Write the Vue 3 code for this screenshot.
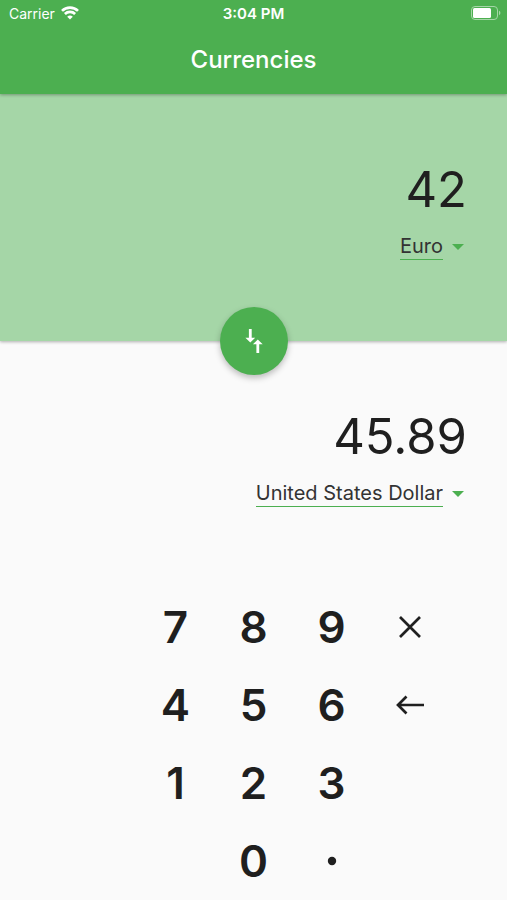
<template>
  <div class="converter">
    <header class="app-bar">
      <div class="status-bar">
        <div class="carrier">
          <span>Carrier</span>
          <svg class="wifi" viewBox="0 0 18 14" aria-hidden="true">
            <path d="M1 4.9a11.4 11.4 0 0 1 16 0" />
            <path d="M3.9 8a7.3 7.3 0 0 1 10.2 0" />
            <path class="wifi-dot" d="M9 13.6 6.2 10.8a4 4 0 0 1 5.6 0z" />
          </svg>
        </div>
        <span class="time">3:04 PM</span>
        <svg class="battery" viewBox="0 0 30 14" aria-hidden="true">
          <rect class="battery-case" x="0.5" y="0.5" width="26" height="13" rx="3.5" />
          <rect class="battery-level" x="2" y="2" width="18" height="10" rx="1.5" />
          <path class="battery-cap" d="M28 4.8v4.4a2.4 2.4 0 0 0 0-4.4z" />
        </svg>
      </div>
      <h1 class="title">Currencies</h1>
    </header>

    <section class="panel panel-from">
      <output class="amount">{{ input }}</output>
      <div class="currency">
        <select v-model="from" class="currency-select" aria-label="From currency">
          <option v-for="c in currencies" :key="c.name" :value="c.name">{{ c.name }}</option>
        </select>
        <svg class="arrow" viewBox="0 0 12 6" aria-hidden="true"><path d="M0 0h12L6 6z" /></svg>
      </div>
      <button class="swap" type="button" aria-label="Swap currencies" @click="swap">
        <svg viewBox="0 0 26 26" aria-hidden="true">
          <path d="M7.9 1h2.8v8.8h3.5l-4.9 4.7-4.9-4.7h3.5z" />
          <path d="M15.4 25h2.8v-8.8h3.5l-4.9-4.7-4.9 4.7h3.5z" />
        </svg>
      </button>
    </section>

    <section class="panel">
      <output class="amount">{{ result }}</output>
      <div class="currency">
        <select v-model="to" class="currency-select" aria-label="To currency">
          <option v-for="c in currencies" :key="c.name" :value="c.name">{{ c.name }}</option>
        </select>
        <svg class="arrow" viewBox="0 0 12 6" aria-hidden="true"><path d="M0 0h12L6 6z" /></svg>
      </div>
    </section>

    <div class="keypad">
      <div v-for="(row, index) in rows" :key="index" class="keypad-row">
        <template v-for="(key, i) in row" :key="i">
          <button v-if="key === 'clear'" class="key" type="button" aria-label="Clear" @click="press(key)">
            <svg viewBox="0 0 28 28" aria-hidden="true"><path d="M4 4l20 20M24 4L4 24" /></svg>
          </button>
          <button v-else-if="key === 'back'" class="key" type="button" aria-label="Backspace" @click="press(key)">
            <svg viewBox="0 0 28 28" aria-hidden="true"><path d="M28 14H2M10.5 5.5L2 14l8.5 8.5" /></svg>
          </button>
          <button v-else-if="key === '.'" class="key" type="button" aria-label="Decimal point" @click="press(key)">
            <svg viewBox="0 0 28 28" aria-hidden="true"><circle cx="14" cy="14" r="4.2" /></svg>
          </button>
          <button v-else-if="key" class="key" type="button" @click="press(key)">{{ key }}</button>
          <span v-else></span>
        </template>
      </div>
    </div>
  </div>
</template>

<script setup>
import { ref, computed } from 'vue';

// value of one unit in US dollars
const currencies = [
  { name: 'Euro', rate: 1.0926 },
  { name: 'United States Dollar', rate: 1 },
];

const rows = [
  ['', '7', '8', '9', 'clear'],
  ['', '4', '5', '6', 'back'],
  ['', '1', '2', '3', ''],
  ['', '', '0', '.', ''],
];

const input = ref('42');
const from = ref('Euro');
const to = ref('United States Dollar');

const rateOf = (name) => currencies.find((c) => c.name === name).rate;

const result = computed(() => {
  const value = (Number(input.value) * rateOf(from.value)) / rateOf(to.value);
  return value.toFixed(2);
});

const swap = () => {
  [from.value, to.value] = [to.value, from.value];
};

const press = (key) => {
  if (key === 'clear') {
    input.value = '0';
  } else if (key === 'back') {
    input.value = input.value.slice(0, -1) || '0';
  } else if (key === '.') {
    if (!input.value.includes('.')) input.value += '.';
  } else {
    input.value = input.value === '0' ? key : input.value + key;
  }
};
</script>

<style>
body {
  margin: 0;
  background: #fafafa;
}
</style>

<style scoped>
.converter {
  display: flex;
  flex-direction: column;
  min-height: 100vh;
  font-family: Inter, 'Liberation Sans', sans-serif;
  color: #1f1f1f;
}

.app-bar {
  position: relative;
  z-index: 1;
  background: #4caf50;
  color: white;
  box-shadow: 0 1px 3px rgba(0, 0, 0, 0.3);
}

.status-bar {
  display: grid;
  grid-template-columns: 1fr auto 1fr;
  align-items: center;
  height: 26px;
  padding: 0 6px;
  font-size: 14px;
}

.carrier {
  display: flex;
  align-items: center;
  gap: 6px;
  padding-left: 3px;
}

.wifi {
  width: 18px;
  height: 14px;
  fill: none;
  stroke: white;
  stroke-width: 2.7;
}

.wifi .wifi-dot {
  fill: white;
  stroke: none;
}

.time {
  font-size: 15px;
  font-weight: 600;
}

.battery {
  justify-self: end;
  width: 30px;
  height: 14px;
}

.battery-case {
  fill: none;
  stroke: #a5d6a7;
}

.battery-level {
  fill: white;
}

.battery-cap {
  fill: #a5d6a7;
}

.title {
  margin: 0;
  height: 68px;
  line-height: 68px;
  text-align: center;
  font-size: 24px;
  font-weight: 500;
}

.panel {
  position: relative;
  display: flex;
  flex: 1;
  flex-direction: column;
  align-items: flex-end;
  justify-content: center;
  box-sizing: border-box;
  min-height: 200px;
  padding: 0 40px 14px;
}

.panel-from {
  background: #a5d6a7;
  box-shadow: 0 1px 3px rgba(0, 0, 0, 0.3);
}

.amount {
  font-size: 49px;
  line-height: 56px;
}

.currency {
  display: flex;
  align-items: center;
  gap: 9px;
  margin-top: 16px;
  padding-right: 3px;
}

.currency-select {
  appearance: none;
  field-sizing: content;
  height: 26px;
  padding: 0;
  border: 0;
  border-bottom: 1px solid #4caf50;
  border-radius: 0;
  background: none;
  color: #333;
  font-family: inherit;
  font-size: 20px;
  cursor: pointer;
}

.arrow {
  width: 12px;
  height: 6px;
  fill: #4caf50;
}

.swap {
  position: absolute;
  bottom: -34px;
  left: 50%;
  display: flex;
  align-items: center;
  justify-content: center;
  width: 68px;
  height: 68px;
  margin-left: -34px;
  padding: 0;
  border: 0;
  border-radius: 50%;
  background: #4caf50;
  box-shadow: 0 3px 6px rgba(0, 0, 0, 0.25);
  cursor: pointer;
  z-index: 1;
}

.swap svg {
  width: 26px;
  height: 26px;
  fill: white;
}

.keypad-row {
  display: grid;
  grid-template-columns: repeat(5, 78px);
  justify-content: center;
}

.key {
  display: flex;
  align-items: center;
  justify-content: center;
  height: 78px;
  padding: 0;
  border: 0;
  background: none;
  color: inherit;
  font-family: inherit;
  font-size: 44px;
  font-weight: 600;
  cursor: pointer;
}

.key svg {
  width: 28px;
  height: 28px;
  fill: none;
  stroke: currentColor;
  stroke-width: 2.7;
}

.key circle {
  fill: currentColor;
  stroke: none;
}
</style>
